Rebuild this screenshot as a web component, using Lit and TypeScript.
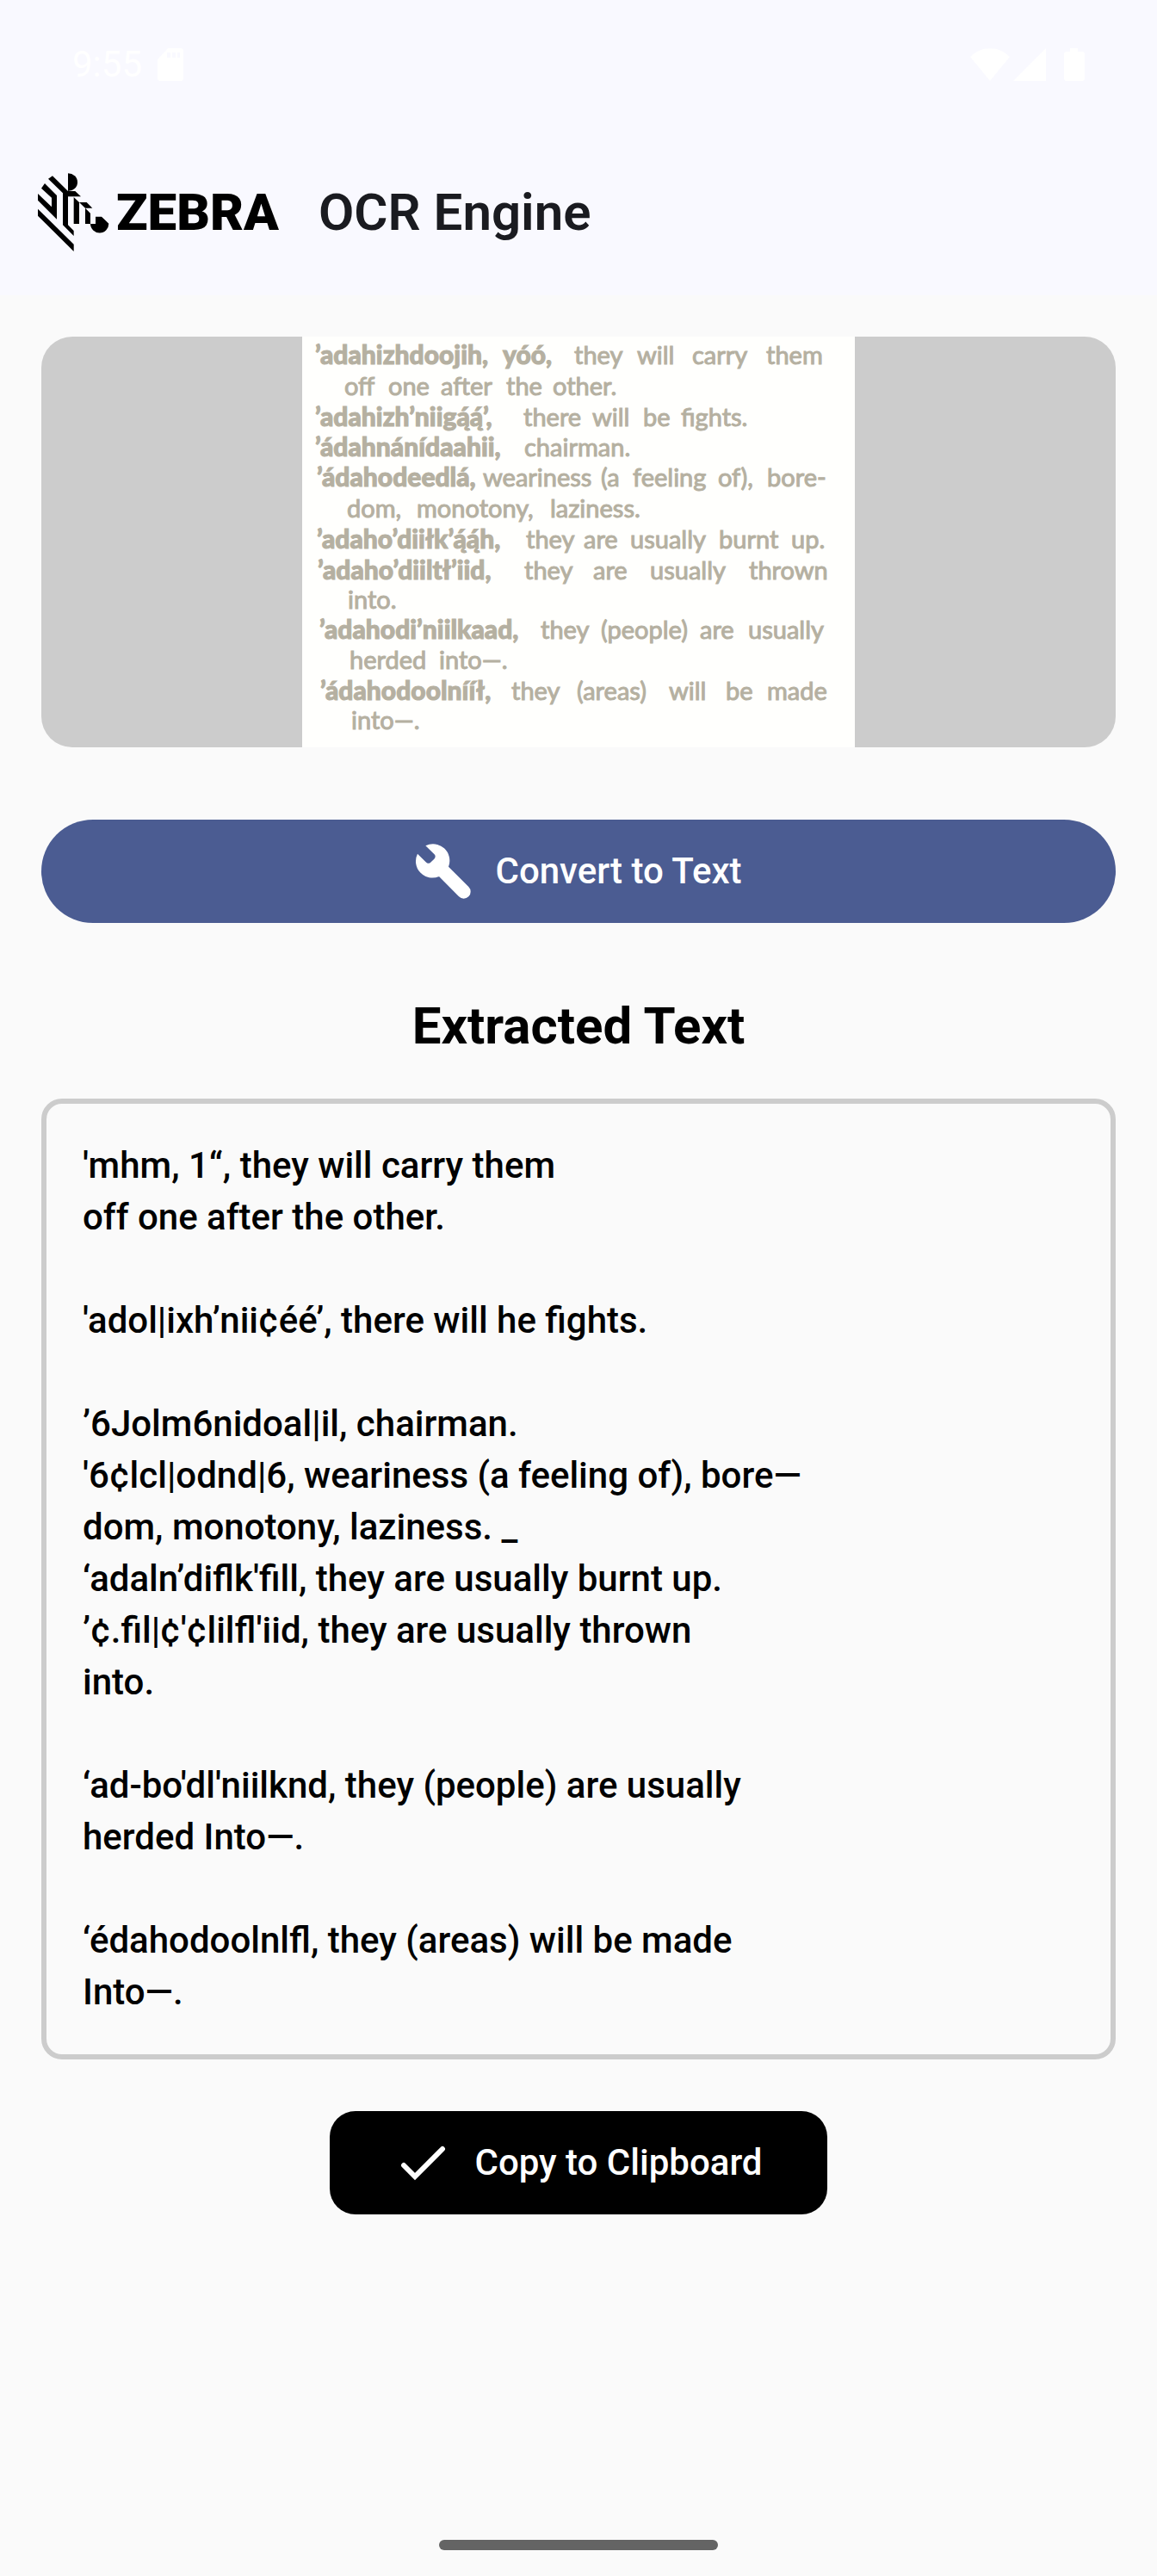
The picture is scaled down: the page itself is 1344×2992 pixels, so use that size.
import { LitElement, html, css, svg } from "lit";
import { customElement } from "lit/decorators.js";

type Word = [x: number, text: string];
interface ScanLine {
  y: number;
  head?: Word[];
  words: Word[];
}

const SCAN: ScanLine[] = [
  { y: 32, head: [[15, "’adahizhdoojih,"], [233, "yóó,"]], words: [[316, "they"], [389, "will"], [453, "carry"], [539, "them"]] },
  { y: 68, words: [[49, "off"], [100, "one"], [161, "after"], [237, "the"], [291, "other."]] },
  { y: 104, head: [[15, "’adahizh’niigą́ą́’,"]], words: [[257, "there"], [337, "will"], [396, "be"], [440, "fights."]] },
  { y: 139, head: [[15, "’ádahnánídaahii,"]], words: [[258, "chairman."]] },
  { y: 174, head: [[17, "’ádahodeedlá,"]], words: [[210, "weariness"], [347, "(a"], [384, "feeling"], [483, "of),"], [540, "bore-"]] },
  { y: 210, words: [[52, "dom,"], [133, "monotony,"], [288, "laziness."]] },
  { y: 246, head: [[17, "’adaho’diiłk’ą́ą́h,"]], words: [[260, "they"], [327, "are"], [381, "usually"], [484, "burnt"], [568, "up."]] },
  { y: 282, head: [[18, "’adaho’diiltł’iid,"]], words: [[258, "they"], [338, "are"], [404, "usually"], [519, "thrown"]] },
  { y: 316, words: [[53, "into."]] },
  { y: 351, head: [[20, "’adahodi’niilkaad,"]], words: [[277, "they"], [347, "(people)"], [462, "are"], [518, "usually"]] },
  { y: 386, words: [[55, "herded"], [159, "into—."]] },
  { y: 422, head: [[21, "’ádahodoolnííł,"]], words: [[243, "they"], [319, "(areas)"], [426, "will"], [492, "be"], [540, "made"]] },
  { y: 456, words: [[57, "into—."]] },
];

const EXTRACTED = `'mhm, 1“, they will carry them
off one after the other.

'adol|ixh’nii¢éé’, there will he fights.

’6Jolm6nidoal|il, chairman.
'6¢lcl|odnd|6, weariness (a feeling of), bore—
dom, monotony, laziness. _
‘adaln’diflk'fill, they are usually burnt up.
’¢.fil|¢'¢lilfl'iid, they are usually thrown
into.

‘ad-bo'dl'niilknd, they (people) are usually
herded Into—.

‘édahodoolnlfl, they (areas) will be made
Into—.`;

@customElement("app-root")
export class AppRoot extends LitElement {
  static styles = css`
    :host {
      display: flex;
      flex-direction: column;
      min-height: 100vh;
      background: #fafafa;
      color: #000;
      font-family: Roboto, sans-serif;
      font-weight: 500;
      font-size: 42px;
      line-height: 60px;
    }
    * {
      box-sizing: border-box;
    }
    svg {
      display: block;
      flex: none;
    }
    .top {
      background: #f9f9ff;
    }
    .status {
      display: flex;
      justify-content: space-between;
      align-items: center;
      height: 150px;
      padding: 0 84px;
      color: #fff;
      font-weight: 400;
    }
    .status-side {
      display: flex;
      align-items: center;
    }
    .time {
      margin-right: 18px;
    }
    .signal {
      margin: 0 21px 0 4px;
    }
    .bar {
      display: flex;
      align-items: center;
      height: 193px;
      padding: 0 44px;
    }
    .logo {
      display: flex;
      align-items: center;
      gap: 8px;
      margin-right: 46px;
    }
    .wordmark {
      font-size: 60px;
      font-weight: 900;
    }
    h1,
    h2 {
      margin: 0;
      font-size: 60px;
      line-height: 72px;
    }
    h1 {
      color: #1a1b20;
      font-weight: 600;
    }
    h2 {
      font-weight: 700;
      text-align: center;
      margin: 84px 0 48px;
    }
    main {
      display: flex;
      flex-direction: column;
      flex: 1;
      padding: 48px 48px 0;
    }
    .preview {
      display: flex;
      justify-content: center;
      margin: 0 0 84px;
      background: #ccc;
      border-radius: 36px;
      overflow: hidden;
    }
    .scan {
      background: #fffffd;
      fill: #b5b0a1;
      stroke: #b5b0a1;
      stroke-width: 1px;
      font-family: Lato, sans-serif;
      font-size: 29px;
      font-weight: 400;
    }
    .head {
      font-size: 30px;
      font-weight: 900;
    }
    button {
      display: flex;
      align-items: center;
      justify-content: center;
      height: 120px;
      border: 0;
      color: #fff;
      font: inherit;
    }
    .convert {
      gap: 27px;
      border-radius: 60px;
      background: #4b5c92;
    }
    .copy {
      align-self: center;
      gap: 24px;
      margin-top: 60px;
      padding: 0 75px 0 72px;
      border-radius: 30px;
      background: #000;
    }
    .result {
      margin: 0;
      padding: 42px;
      border: 6px solid #ccc;
      border-radius: 24px;
      font: inherit;
      white-space: pre-wrap;
    }
    .handle {
      width: 324px;
      height: 12px;
      margin: 0 auto 30px;
      border-radius: 6px;
      background: #646464;
    }
  `;

  render() {
    return html`
      <header class="top">
        <div class="status">
          <div class="status-side">
            <span class="time">9:55</span>
            <svg width="30" height="38" viewBox="0 0 30 38" fill="#fff">
              <path fill-rule="evenodd" d="M12 0H27Q30 0 30 3V35Q30 38 27 38H3Q0 38 0 35V13ZM11 5V11H15V5ZM17 5V11H21V5ZM23 5V11H26V5Z" />
            </svg>
          </div>
          <div class="status-side">
            <svg width="46" height="38" viewBox="0 0 46 38" fill="#fff">
              <path d="M0 10C13-3 33-3 46 10L23 38Z" />
            </svg>
            <svg class="signal" width="38" height="38" viewBox="0 0 38 38" fill="#fff">
              <path d="M38 0V38H0Z" />
            </svg>
            <svg width="24" height="38" viewBox="0 0 24 38" fill="#fff">
              <path d="M7 0H16V4H21Q24 4 24 7V35Q24 38 21 38H3Q0 38 0 35V7Q0 4 3 4H7Z" />
            </svg>
          </div>
        </div>
        <div class="bar">
          <div class="logo">
            <svg width="83" height="91" viewBox="42 35 249 273">
              <path d="M147 36A33 31 0 0 1 147 98Z" />
              <path d="M78 55L93 45L147 98H172L192 117H147V216L167 236V254L129 216V105Z" />
              <path d="M66 71L108 113V196L42 130V107L90 153V121L54 88Z" />
              <path d="M42 160L167 283V308L42 184Z" />
              <path d="M167 119L186 137V212H167Z" />
              <path d="M186 137H212L232 157H207Z" />
              <path d="M207 157L225 175V212H207Z" />
              <path d="M225 212H243V187H264L289 211A32 32 0 0 1 225 212Z" />
            </svg>
            <span class="wordmark">ZEBRA</span>
          </div>
          <h1>OCR Engine</h1>
        </div>
      </header>
      <main>
        <figure class="preview">
          <svg class="scan" width="642" height="477" viewBox="0 0 642 477">
            ${SCAN.map(
              (line) => svg`
                ${(line.head ?? []).map(([x, t]) => svg`<text class="head" x=${x} y=${line.y}>${t}</text>`)}
                ${line.words.map(([x, t]) => svg`<text x=${x} y=${line.y}>${t}</text>`)}`,
            )}
          </svg>
        </figure>
        <button class="convert" type="button">
          <svg width="66" height="66" viewBox="120 114 198 198" fill="#fff">
            <path d="M157 124A58 58 0 0 1 237 197L307 267A24 24 0 0 1 273 301L204 231A58 58 0 0 1 129 152L158 181Q167 190 176 181L187 170Q195 161 187 153Z" />
          </svg>
          Convert to Text
        </button>
        <h2>Extracted Text</h2>
        <pre class="result">${EXTRACTED}</pre>
        <button class="copy" type="button">
          <svg width="72" height="72" viewBox="0 0 72 72" fill="none" stroke="#fff" stroke-width="6" stroke-linecap="round">
            <path d="M14 39L27 52L59 20" />
          </svg>
          Copy to Clipboard
        </button>
      </main>
      <div class="handle"></div>
    `;
  }
}
